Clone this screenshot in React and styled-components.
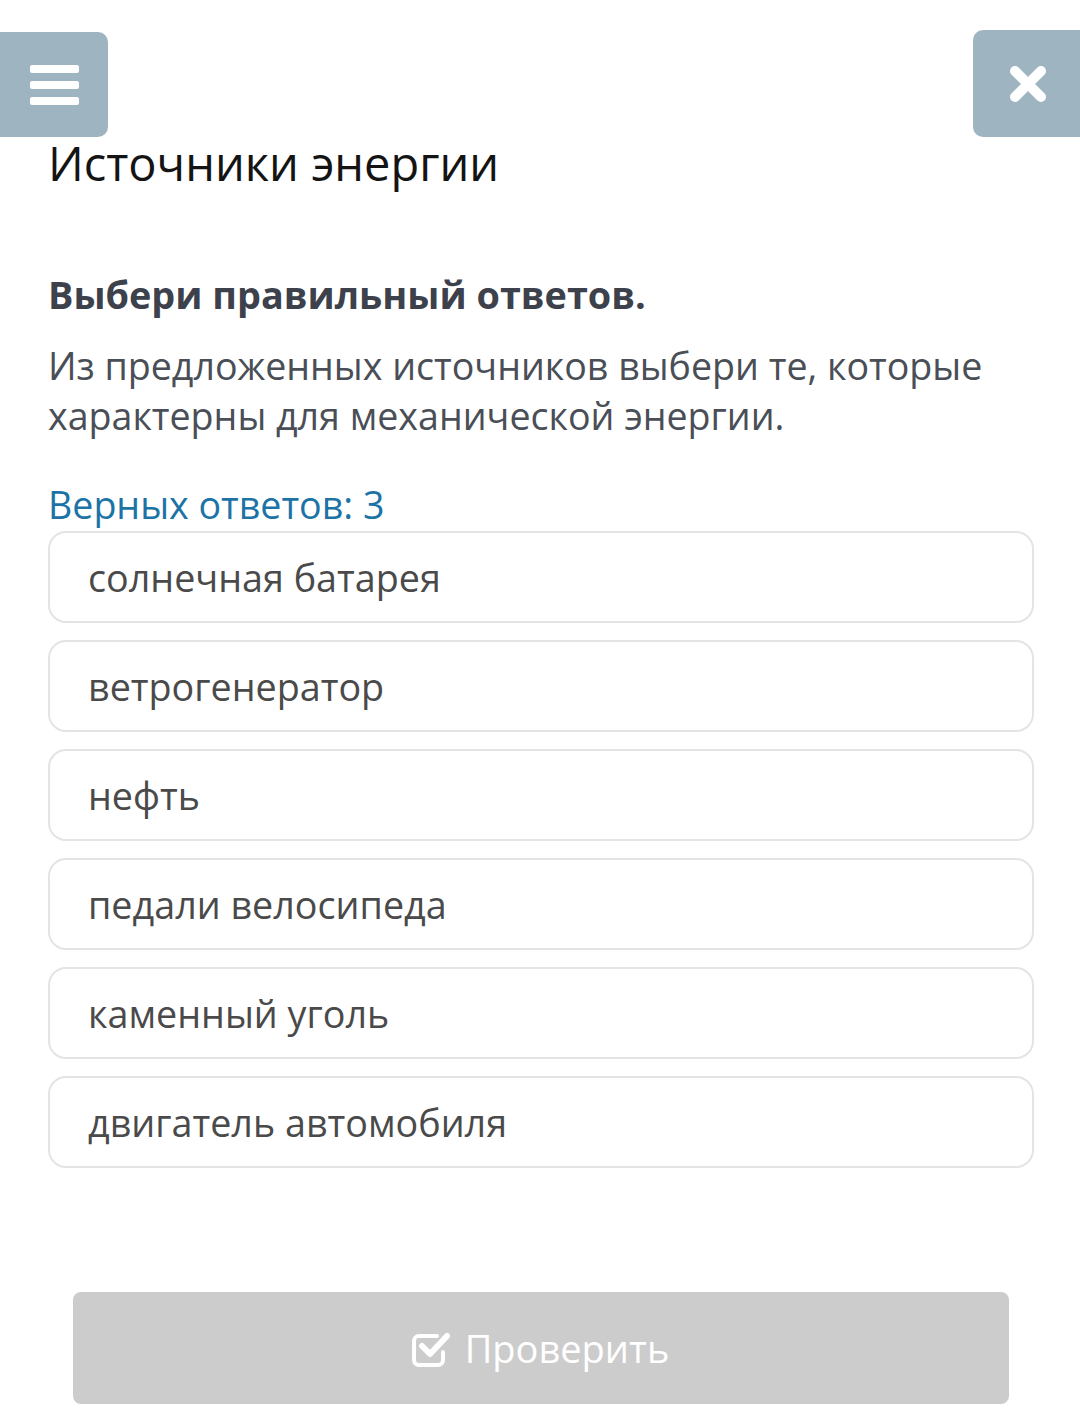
import React from "react";
import styled, { createGlobalStyle } from "styled-components";

const Global = createGlobalStyle`
  html, body { margin: 0; padding: 0; background: #ffffff; }
  body { font-family: "Open Sans", "Noto Sans", sans-serif; -webkit-font-smoothing: antialiased; }
  * { box-sizing: border-box; }
`;

const Page = styled.div`
  width: 1080px;
  min-height: 1419px;
  background: #fff;
  display: flex;
  flex-direction: column;
`;

const TopBar = styled.div`
  display: flex;
  justify-content: space-between;
  align-items: flex-start;
  padding-top: 30px;
  height: 137px;
`;

const MenuButton = styled.div`
  width: 108px;
  height: 105px;
  margin-top: 2px;
  background: #9fb4c1;
  border-radius: 0 10px 10px 0;
  display: flex;
  flex-direction: column;
  justify-content: center;
  gap: 8px;
  padding-left: 30px;
`;

const Bar = styled.span`
  display: block;
  width: 49px;
  height: 8px;
  background: #fff;
  border-radius: 2px;
`;

const CloseButton = styled.div`
  width: 107px;
  height: 107px;
  background: #9fb4c1;
  border-radius: 10px 0 0 10px;
  display: flex;
  align-items: center;
  justify-content: center;
  padding-left: 3px;
`;

const Content = styled.div`
  padding: 0 46px 0 48px;
  display: flex;
  flex-direction: column;
`;

const Title = styled.h1`
  margin: 0;
  font-weight: 400;
  font-size: 47px;
  line-height: 56px;
  color: #141414;
  margin-top: -2px;
`;

const Lead = styled.div`
  margin-top: 81px;
  font-weight: 700;
  font-size: 37.8px;
  line-height: 46px;
  color: #3c414b;
`;

const Para = styled.p`
  margin: 23px 0 0;
  font-size: 37.6px;
  line-height: 50px;
  color: #4a4e56;
`;

const Count = styled.div`
  margin-top: 41px;
  font-size: 37.6px;
  line-height: 46px;
  color: #1d73a6;
`;

const Options = styled.div`
  display: flex;
  flex-direction: column;
  gap: 17px;
  margin-top: 3px;
`;

const Option = styled.div`
  height: 92px;
  border: 2px solid #e4e4e4;
  border-radius: 18px;
  display: flex;
  align-items: center;
  padding-left: 38px;
  font-size: 37.7px;
  color: #4a4a4a;
`;

const Footer = styled.div`
  padding: 124px 71px 0 73px;
`;

const CheckButton = styled.div`
  height: 112px;
  background: #cccccc;
  border-radius: 8px;
  display: flex;
  align-items: center;
  justify-content: center;
  gap: 14px;
  color: #fff;
  font-size: 38px;
  padding-right: 2px;
`;

function CloseIcon() {
  return (
    <svg width="40" height="40" viewBox="0 0 40 40">
      <path d="M7 7 L33 33 M33 7 L7 33" stroke="#fff" strokeWidth="10" strokeLinecap="round" />
    </svg>
  );
}

function CheckSquareIcon() {
  return (
    <svg width="40" height="38" viewBox="0 0 40 38" fill="none">
      <path
        d="M26 7 H8 a5 5 0 0 0 -5 5 v19 a5 5 0 0 0 5 5 h19 a5 5 0 0 0 5 -5 v-8"
        stroke="#fff"
        strokeWidth="4"
        strokeLinecap="round"
        strokeLinejoin="round"
      />
      <path
        d="M11 17 L19 25 L36 7"
        stroke="#fff"
        strokeWidth="6"
        strokeLinecap="round"
        strokeLinejoin="round"
      />
    </svg>
  );
}

const answers = [
  "солнечная батарея",
  "ветрогенератор",
  "нефть",
  "педали велосипеда",
  "каменный уголь",
  "двигатель автомобиля",
];

export default function App() {
  return (
    <>
      <Global />
      <Page>
        <TopBar>
          <MenuButton>
            <Bar />
            <Bar />
            <Bar />
          </MenuButton>
          <CloseButton>
            <CloseIcon />
          </CloseButton>
        </TopBar>
        <Content>
          <Title>Источники энергии</Title>
          <Lead>Выбери правильный ответов.</Lead>
          <Para>
            Из предложенных источников выбери те, которые характерны для механической энергии.
          </Para>
          <Count>Верных ответов: 3</Count>
          <Options>
            {answers.map((a) => (
              <Option key={a}>{a}</Option>
            ))}
          </Options>
        </Content>
        <Footer>
          <CheckButton>
            <CheckSquareIcon />
            <span>Проверить</span>
          </CheckButton>
        </Footer>
      </Page>
    </>
  );
}
